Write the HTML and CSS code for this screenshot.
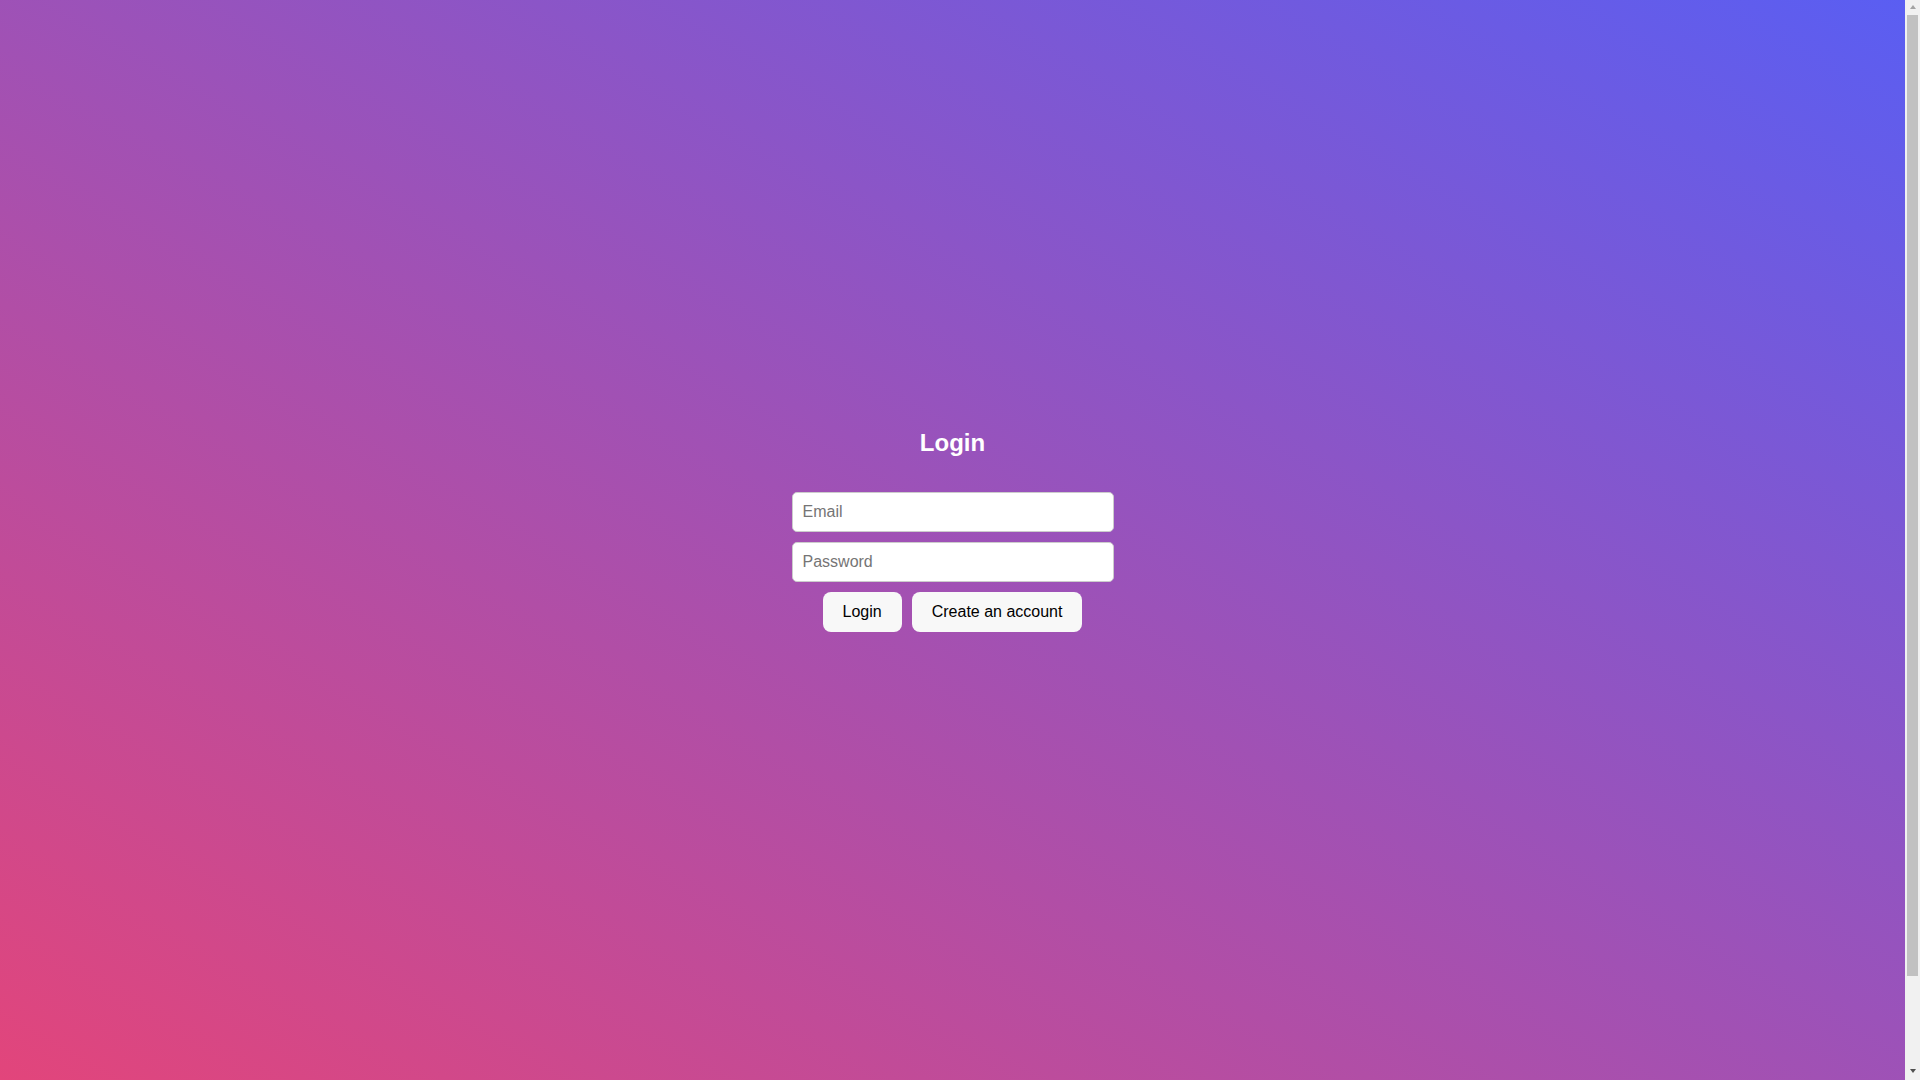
FILE: index.html
```html
<!DOCTYPE html>
<html lang="en">
<head>
<meta charset="utf-8">
<title>Login</title>
<link rel="stylesheet" href="styles.css">
</head>
<body>
<div class="page">
  <main class="screen">
    <form class="login">
      <h2 class="title">Login</h2>
      <input class="field" type="email" placeholder="Email">
      <input class="field" type="password" placeholder="Password">
      <div class="actions">
        <button class="btn" type="button">Login</button>
        <button class="btn" type="button">Create an account</button>
      </div>
    </form>
  </main>
  <div class="scrollbar" aria-hidden="true">
    <span class="arrow-up"></span>
    <span class="thumb"></span>
    <span class="track-rest"></span>
    <span class="arrow-down"></span>
  </div>
</div>
</body>
</html>
```

FILE: styles.css
```css
html, body {
  margin: 0;
  padding: 0;
  overflow: hidden;
}

body {
  font-family: "Liberation Sans", Arial, sans-serif;
}

.page {
  height: 100vh;
  display: flex;
}

.screen {
  flex: 1;
  background: linear-gradient(to top right, #e2457b 0%, #5a5ef2 100%);
  display: flex;
  align-items: center;
  justify-content: center;
}

.login {
  display: flex;
  flex-direction: column;
  align-items: center;
  gap: 10px;
  padding-bottom: 19px;
}

.title {
  margin: 0 0 25px;
  font-size: 24px;
  font-weight: bold;
  color: #ffffff;
  line-height: 27.6px;
}

.field {
  box-sizing: border-box;
  width: 322px;
  height: 40px;
  padding: 0 10px;
  border: 1px solid #cccccc;
  border-radius: 5px;
  background: #ffffff;
  font-family: "Liberation Sans", Arial, sans-serif;
  font-size: 16px;
  color: #222;
  outline: none;
}

.field::placeholder {
  color: #757575;
}

.actions {
  display: flex;
  gap: 10px;
}

.btn {
  height: 40px;
  padding: 0 20px;
  border: none;
  border-radius: 8px;
  background: #f8f8f8;
  color: #000;
  font-family: "Liberation Sans", Arial, sans-serif;
  font-size: 16px;
  cursor: pointer;
}

/* replica of the native scrollbar */
.scrollbar {
  width: 15px;
  background: #f1f1f1;
  display: flex;
  flex-direction: column;
  align-items: center;
}

.arrow-up {
  margin-top: 5px;
  width: 0;
  height: 0;
  border-left: 3.5px solid transparent;
  border-right: 3.5px solid transparent;
  border-bottom: 4px solid #a3a3a3;
}

.thumb {
  margin-top: 6px;
  width: 11px;
  height: 961px;
  background: #c1c1c1;
}

.track-rest {
  flex: 1;
}

.arrow-down {
  margin-bottom: 7px;
  width: 0;
  height: 0;
  border-left: 3.5px solid transparent;
  border-right: 3.5px solid transparent;
  border-top: 4px solid #505050;
}
```
